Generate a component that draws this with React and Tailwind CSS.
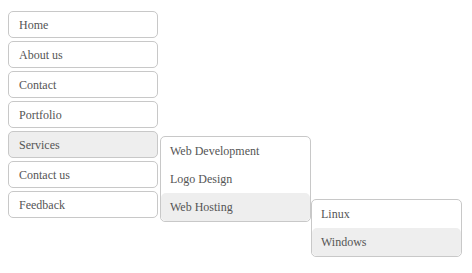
import React from 'react';

const mainItems = ['Home', 'About us', 'Contact', 'Portfolio', 'Services', 'Contact us', 'Feedback'];
const serviceItems = ['Web Development', 'Logo Design', 'Web Hosting'];
const hostingItems = ['Linux', 'Windows'];

const font = { fontFamily: '"Liberation Serif", "Times New Roman", serif' };

const SubMenu = ({ items, active, children, className }) => (
  <ul className={`absolute w-[151px] bg-white border border-[#c8c8c8] rounded-[5px] ${className}`}>
    {items.map((item) => (
      <li key={item} className="relative">
        <a
          className={`flex items-center h-[28px] pl-[9px] text-[12px] text-[#555] rounded-[5px] ${
            item === active ? 'bg-[#eeeeee]' : ''
          }`}
        >
          {item}
        </a>
        {item === active && children}
      </li>
    ))}
  </ul>
);

export default function App() {
  return (
    <div className="w-[472px] h-[273px] bg-white pl-2 pt-[11px]" style={font}>
      <ul className="flex flex-col gap-[3px] w-[150px]">
        {mainItems.map((item) => (
          <li key={item} className="relative">
            <a
              className={`flex items-center h-[27px] pl-[10px] text-[12px] text-[#555] border border-[#c8c8c8] rounded-[5px] ${
                item === 'Services' ? 'bg-[#eeeeee]' : 'bg-white'
              }`}
            >
              {item}
            </a>
            {item === 'Services' && (
              <SubMenu items={serviceItems} active="Web Hosting" className="left-[152px] top-[5px] z-10">
                <SubMenu items={hostingItems} active="Windows" className="left-[150px] top-[6px] z-20" />
              </SubMenu>
            )}
          </li>
        ))}
      </ul>
    </div>
  );
}
